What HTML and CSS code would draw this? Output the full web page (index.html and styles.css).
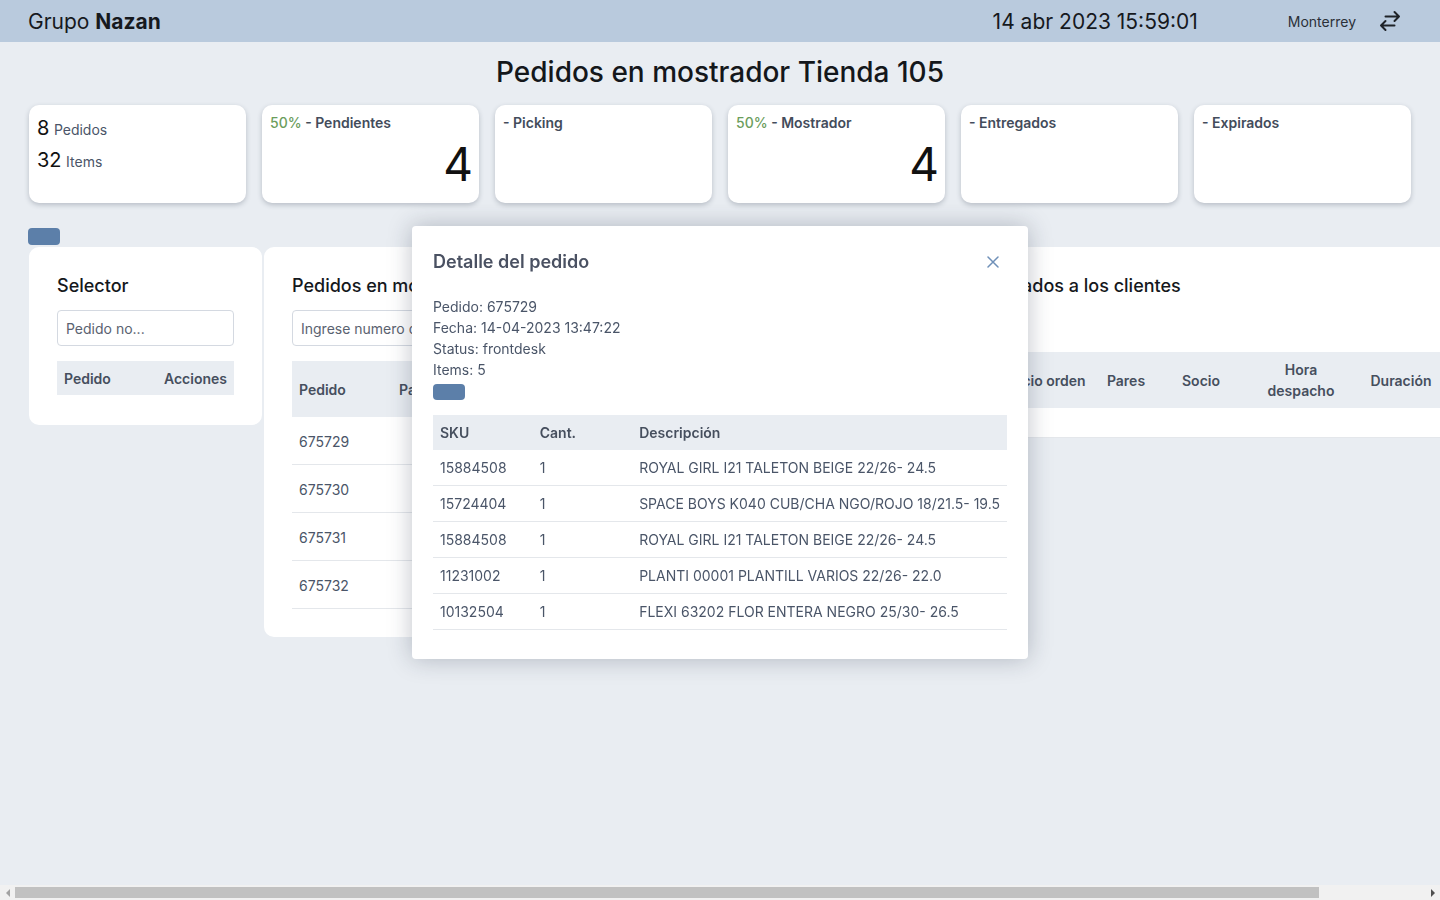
FILE: index.html
```html
<!DOCTYPE html>
<html lang="es">
<head>
<meta charset="utf-8">
<title>Pedidos en mostrador Tienda 105</title>
<link rel="stylesheet" href="styles.css">
</head>
<body>
<div class="app">
<div class="viewport">
<header class="topbar">
  <div class="brand">Grupo <b>Nazan</b></div>
  <div class="clock">14 abr 2023 15:59:01</div>
  <div class="city">Monterrey</div>
  <svg class="swap" width="24" height="24" viewBox="0 0 24 24" fill="none" stroke="#1f2328" stroke-width="2" stroke-linecap="round" stroke-linejoin="round"><path d="M7.5 21L3 16.5m0 0L7.5 12M3 16.5h13.5M16.5 3L21 7.5m0 0L16.5 12M21 7.5H7.5"/></svg>
</header>

<main class="page">
  <h1 class="title">Pedidos en mostrador Tienda 105</h1>

  <section class="stats">
    <div class="stat">
      <div class="count-line"><span class="big">8</span> <span class="lbl">Pedidos</span></div>
      <div class="count-line"><span class="big">32</span> <span class="lbl">Items</span></div>
    </div>
    <div class="stat">
      <div class="stat-head"><span class="pct">50%</span> - Pendientes</div>
      <div class="stat-num">4</div>
    </div>
    <div class="stat">
      <div class="stat-head">- Picking</div>
    </div>
    <div class="stat">
      <div class="stat-head"><span class="pct">50%</span> - Mostrador</div>
      <div class="stat-num">4</div>
    </div>
    <div class="stat">
      <div class="stat-head">- Entregados</div>
    </div>
    <div class="stat">
      <div class="stat-head">- Expirados</div>
    </div>
  </section>

  <button class="chip" type="button"></button>

  <section class="panels">
    <div class="panel panel-sel">
      <h2 class="panel-title">Selector</h2>
      <input class="field" type="text" placeholder="Pedido no...">
      <table class="grid">
        <thead><tr><th>Pedido</th><th class="right">Acciones</th></tr></thead>
      </table>
    </div>

    <div class="panel panel-mos">
      <h2 class="panel-title">Pedidos en mostrador</h2>
      <input class="field" type="text" placeholder="Ingrese numero de pedido">
      <table class="grid rows">
        <thead><tr><th class="c1">Pedido</th><th class="c2">Pares</th><th class="c3">Socio</th><th class="c4">Hora entrada</th><th class="c5">Tiempo</th><th class="c6">Acciones</th></tr></thead>
        <tbody>
          <tr><td>675729</td><td class="mid">5</td><td></td><td></td><td></td><td></td></tr>
          <tr><td>675730</td><td class="mid">4</td><td></td><td></td><td></td><td></td></tr>
          <tr><td>675731</td><td class="mid">3</td><td></td><td></td><td></td><td></td></tr>
          <tr><td>675732</td><td class="mid">4</td><td></td><td></td><td></td><td></td></tr>
        </tbody>
      </table>
    </div>

    <div class="panel panel-ent">
      <h2 class="panel-title">Pedidos entregados a los clientes</h2>
      <table class="grid center ent">
        <thead><tr><th class="e1">Pedido</th><th class="e2">Inicio orden</th><th class="e3">Pares</th><th class="e4">Socio</th><th class="e5">Hora despacho</th><th class="e6">Duración</th><th class="e7"></th></tr></thead>
        <tbody><tr class="empty"><td colspan="7"></td></tr></tbody>
      </table>
    </div>
  </section>
</main>
</div>

<div class="hscroll" aria-hidden="true">
  <div class="hs-btn"><span class="tri tri-left"></span></div>
  <div class="hs-track"><div class="hs-thumb"></div></div>
  <div class="hs-btn"><span class="tri tri-right"></span></div>
</div>
</div>

<div class="modal" role="dialog">
  <div class="modal-head">
    <h3 class="modal-title">Detalle del pedido</h3>
    <svg class="close" width="12" height="12" viewBox="0 0 12 12" fill="none" stroke="#6f90b8" stroke-width="1.5" stroke-linecap="round"><path d="M1 1L11 11M11 1L1 11"/></svg>
  </div>
  <div class="modal-info">
    <div>Pedido: 675729</div>
    <div>Fecha: 14-04-2023 13:47:22</div>
    <div>Status: frontdesk</div>
    <div>Items: 5</div>
  </div>
  <button class="chip chip-modal" type="button"></button>
  <table class="detail">
    <thead><tr><th class="d1">SKU</th><th class="d2">Cant.</th><th>Descripción</th></tr></thead>
    <tbody>
      <tr><td>15884508</td><td>1</td><td>ROYAL GIRL I21 TALETON BEIGE 22/26- 24.5</td></tr>
      <tr><td>15724404</td><td>1</td><td>SPACE BOYS K040 CUB/CHA NGO/ROJO 18/21.5- 19.5</td></tr>
      <tr><td>15884508</td><td>1</td><td>ROYAL GIRL I21 TALETON BEIGE 22/26- 24.5</td></tr>
      <tr><td>11231002</td><td>1</td><td>PLANTI 00001 PLANTILL VARIOS 22/26- 22.0</td></tr>
      <tr><td>10132504</td><td>1</td><td>FLEXI 63202 FLOR ENTERA NEGRO 25/30- 26.5</td></tr>
    </tbody>
  </table>
</div>
</body>
</html>
```

FILE: styles.css
```css
* { box-sizing: border-box; }

html, body {
  margin: 0;
  padding: 0;
  height: 100%;
  overflow: hidden;
}

body {
  background: #e9edf2;
  font-family: Inter, "Noto Sans", sans-serif;
  color: #111418;
}

.app {
  height: 100vh;
  display: flex;
  flex-direction: column;
}

.viewport {
  flex: 1;
  min-height: 0;
  overflow: hidden;
}

/* horizontal scrollbar strip */
.hscroll {
  height: 15px;
  flex-shrink: 0;
  display: flex;
  background: #f1f1f1;
}
.hs-btn {
  width: 15px;
  height: 15px;
  flex-shrink: 0;
  display: flex;
  align-items: center;
  justify-content: center;
}
.hs-track {
  flex: 1;
  display: flex;
  align-items: center;
}
.hs-thumb {
  width: 1304px;
  height: 11px;
  background: #c1c1c1;
}
.tri {
  display: block;
  width: 0;
  height: 0;
  border-top: 4px solid transparent;
  border-bottom: 4px solid transparent;
}
.tri-left { border-right: 4px solid #a3a3a3; }
.tri-right { border-left: 4px solid #505050; }

.topbar {
  height: 42px;
  background: #b9cadd;
  display: flex;
  align-items: center;
  padding: 0 38px 0 28px;
}

.brand {
  flex: 1;
  font-size: 21px;
  color: #16191d;
}
.brand b { font-weight: 700; }

.clock {
  font-size: 21px;
  color: #16191d;
  margin-right: 90px;
}

.city {
  font-size: 14px;
  color: #2b3038;
  margin-right: 22px;
}

.swap { display: block; }

.title {
  margin: 13px 0 16px;
  font-size: 28px;
  line-height: 34px;
  font-weight: 500;
  text-align: center;
  color: #14171b;
}

.stats {
  display: flex;
  gap: 16px;
  padding-left: 29px;
}

.stat {
  width: 217px;
  height: 98px;
  flex-shrink: 0;
  background: #fff;
  border-radius: 10px;
  box-shadow: 0 2px 5px rgba(40, 50, 70, 0.25);
  padding: 8px 6px 8px 8px;
  display: flex;
  flex-direction: column;
}

.count-line {
  line-height: 31px;
}
.count-line .big {
  font-size: 20px;
  color: #111;
}
.count-line .lbl {
  font-size: 14px;
  color: #4a5568;
}

.stat-head {
  font-size: 14px;
  line-height: 20px;
  font-weight: 600;
  color: #434c5b;
}
.pct {
  color: #6b9d5c;
  font-weight: 500;
}

.stat-num {
  margin-top: 8px;
  font-size: 46px;
  line-height: 46px;
  text-align: right;
  color: #111;
}

.chip {
  display: block;
  width: 32px;
  height: 17px;
  border: 0;
  padding: 0;
  border-radius: 4px;
  background: #5c7fa9;
  margin: 25px 0 2px 28px;
}

.panels {
  display: flex;
  gap: 2px;
  padding-left: 29px;
  align-items: flex-start;
}

.panel {
  flex-shrink: 0;
  background: #fff;
  border-radius: 10px;
  padding: 28px;
}

.panel-sel { width: 233px; padding-bottom: 30px; }
.panel-mos { width: 594px; }
.panel-ent {
  width: 697px;
  padding: 28px 24px 0 32px;
  border-radius: 10px 0 0 10px;
}

.panel-title {
  margin: 0 0 13px;
  font-size: 18px;
  line-height: 22px;
  font-weight: 500;
  color: #15181c;
}

.field {
  display: block;
  width: 100%;
  height: 36px;
  border: 1px solid #d4d9e1;
  border-radius: 4px;
  padding: 0 8px;
  font-family: inherit;
  font-size: 14px;
  color: #333;
  background: #fff;
  margin-bottom: 15px;
}
.field::placeholder { color: #5a6270; }
.panel-mos .field { margin-top: 1px; }

.grid {
  width: 100%;
  border-collapse: collapse;
  font-size: 14px;
  color: #4a5568;
}

.grid th {
  background: #e9edf2;
  font-weight: 600;
  text-align: left;
  padding: 7px 7px 6px;
  line-height: 21px;
  color: #464f5e;
}
.grid th.right { text-align: right; }

.grid.rows th { padding-bottom: 7px; }

.grid.rows td {
  padding: 14px 7px 12px;
  line-height: 21px;
  border-bottom: 1px solid #e4e7eb;
}
.grid.rows td.mid { text-align: center; }

.c1 { width: 100px; }
.c2 { width: 70px; }
.c3 { width: 110px; }
.c4 { width: 80px; }
.c5 { width: 90px; }
.c6 { width: 88px; }

.panel-ent .panel-title { margin-bottom: 55px; }

.ent { table-layout: fixed; width: 641px; margin-left: -4px; }
.grid.center th { text-align: center; padding: 7px 8px; }
.e1 { width: 107px; }
.e2 { width: 102px; }
.e3 { width: 58px; }
.e4 { width: 92px; }
.e5 { width: 108px; }
.e6 { width: 92px; }
.e7 { width: 82px; }

.ent .empty td {
  height: 29px;
  padding: 0;
  border-bottom: 1px solid #e4e7eb;
}

.modal {
  position: fixed;
  left: 412px;
  top: 226px;
  width: 616px;
  background: #fff;
  border-radius: 4px;
  box-shadow: 0 0 24px rgba(30, 40, 60, 0.28);
  padding: 22px 21px 29px;
}

.modal-head {
  display: flex;
  align-items: center;
  justify-content: space-between;
  margin-bottom: 21px;
}

.modal-title {
  margin: 0;
  font-size: 18px;
  line-height: 27px;
  font-weight: 600;
  color: #4a5162;
}

.close {
  display: block;
  margin-right: 8px;
}

.modal-info {
  font-size: 14px;
  line-height: 21px;
  color: #4a5568;
}

.chip-modal {
  margin: 4px 0 15px 0;
  width: 32px;
  height: 16px;
}

.detail {
  width: 100%;
  border-collapse: collapse;
  font-size: 14px;
  color: #4a5568;
}
.detail th {
  background: #e9edf2;
  text-align: left;
  font-weight: 600;
  color: #464f5e;
  padding: 7px;
  line-height: 21px;
}
.detail td {
  padding: 7px;
  line-height: 21px;
  border-bottom: 1px solid #e4e7eb;
  white-space: nowrap;
}
.d1 { width: 100px; }
.d2 { width: 100px; }
```
